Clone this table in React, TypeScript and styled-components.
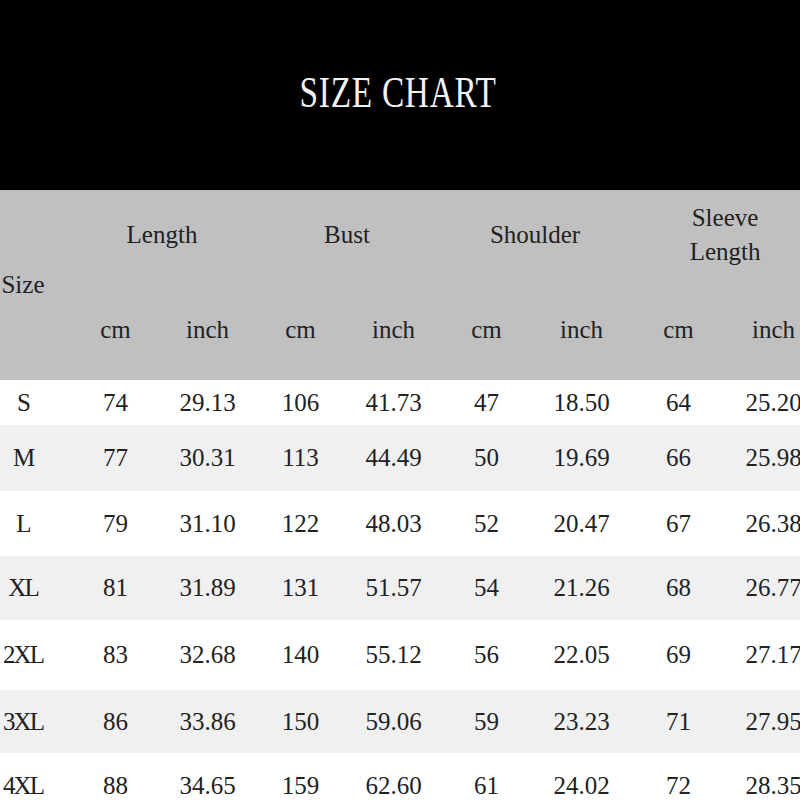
import styled, { createGlobalStyle } from 'styled-components';

const GlobalStyle = createGlobalStyle`
  html, body {
    margin: 0;
    padding: 0;
    background: #ffffff;
  }
  body {
    width: 800px;
    height: 800px;
    overflow: hidden;
    font-family: 'Liberation Serif', 'Times New Roman', serif;
  }
`;

const Page = styled.div`
  width: 800px;
  height: 800px;
  overflow: hidden;
  display: flex;
  flex-direction: column;
`;

const Banner = styled.header`
  height: 190px;
  flex-shrink: 0;
  background: #000000;
  display: flex;
  align-items: center;
  justify-content: center;
  padding: 0 4px 6px 0;
  box-sizing: border-box;
`;

const Title = styled.h1`
  margin: 0;
  font-family: 'Liberation Serif', 'Times New Roman', serif;
  font-weight: 400;
  font-size: 45px;
  color: #f2f2f2;
  letter-spacing: 1px;
  transform: scaleX(0.74);
  white-space: nowrap;
`;

const Chart = styled.table`
  margin-left: -24px;
  width: 844px;
  table-layout: fixed;
  border-collapse: collapse;
  font-size: 25px;
  color: #222222;
`;

const HeadRow = styled.tr<{ $height: number }>`
  height: ${(p) => p.$height}px;
  background: #c0c0c0;
`;

const HeadCell = styled.th`
  padding: 0;
  font-weight: 400;
  text-align: center;
  vertical-align: middle;
  line-height: 34px;
  color: #222222;
`;

const BodyRow = styled.tr<{ $height: number; $shade: boolean }>`
  height: ${(p) => p.$height}px;
  background: ${(p) => (p.$shade ? '#f0f0f0' : '#ffffff')};
`;

const Cell = styled.td`
  padding: 0;
  text-align: center;
  vertical-align: middle;
  white-space: nowrap;
`;

const SizeCell = styled(Cell)`
  letter-spacing: -2px;
`;

const colWidths = [94, 91, 93, 93, 93, 93, 97, 97, 93];

const groups = ['Length', 'Bust', 'Shoulder', 'Sleeve\nLength'];

const sizes = [
  { size: 'S', values: ['74', '29.13', '106', '41.73', '47', '18.50', '64', '25.20'], height: 45 },
  { size: 'M', values: ['77', '30.31', '113', '44.49', '50', '19.69', '66', '25.98'], height: 66 },
  { size: 'L', values: ['79', '31.10', '122', '48.03', '52', '20.47', '67', '26.38'], height: 65 },
  { size: 'XL', values: ['81', '31.89', '131', '51.57', '54', '21.26', '68', '26.77'], height: 64 },
  { size: '2XL', values: ['83', '32.68', '140', '55.12', '56', '22.05', '69', '27.17'], height: 70 },
  { size: '3XL', values: ['86', '33.86', '150', '59.06', '59', '23.23', '71', '27.95'], height: 63 },
  { size: '4XL', values: ['88', '34.65', '159', '62.60', '61', '24.02', '72', '28.35'], height: 65 },
];

function App() {
  return (
    <Page>
      <GlobalStyle />
      <Banner>
        <Title>SIZE CHART</Title>
      </Banner>
      <Chart>
        <colgroup>
          {colWidths.map((w, i) => (
            <col key={i} style={{ width: w }} />
          ))}
        </colgroup>
        <thead>
          <HeadRow $height={90}>
            <HeadCell rowSpan={2}>Size</HeadCell>
            {groups.map((g) => (
              <HeadCell key={g} colSpan={2}>
                {g.split('\n').map((line, i) => (
                  <div key={i}>{line}</div>
                ))}
              </HeadCell>
            ))}
          </HeadRow>
          <HeadRow $height={100}>
            {groups.map((g) => [
              <HeadCell key={g + 'cm'}>cm</HeadCell>,
              <HeadCell key={g + 'inch'}>inch</HeadCell>,
            ])}
          </HeadRow>
        </thead>
        <tbody>
          {sizes.map((row, i) => (
            <BodyRow key={row.size} $height={row.height} $shade={i % 2 === 1}>
              <SizeCell>{row.size}</SizeCell>
              {row.values.map((v, j) => (
                <Cell key={j}>{v}</Cell>
              ))}
            </BodyRow>
          ))}
        </tbody>
      </Chart>
    </Page>
  );
}

export default App;
